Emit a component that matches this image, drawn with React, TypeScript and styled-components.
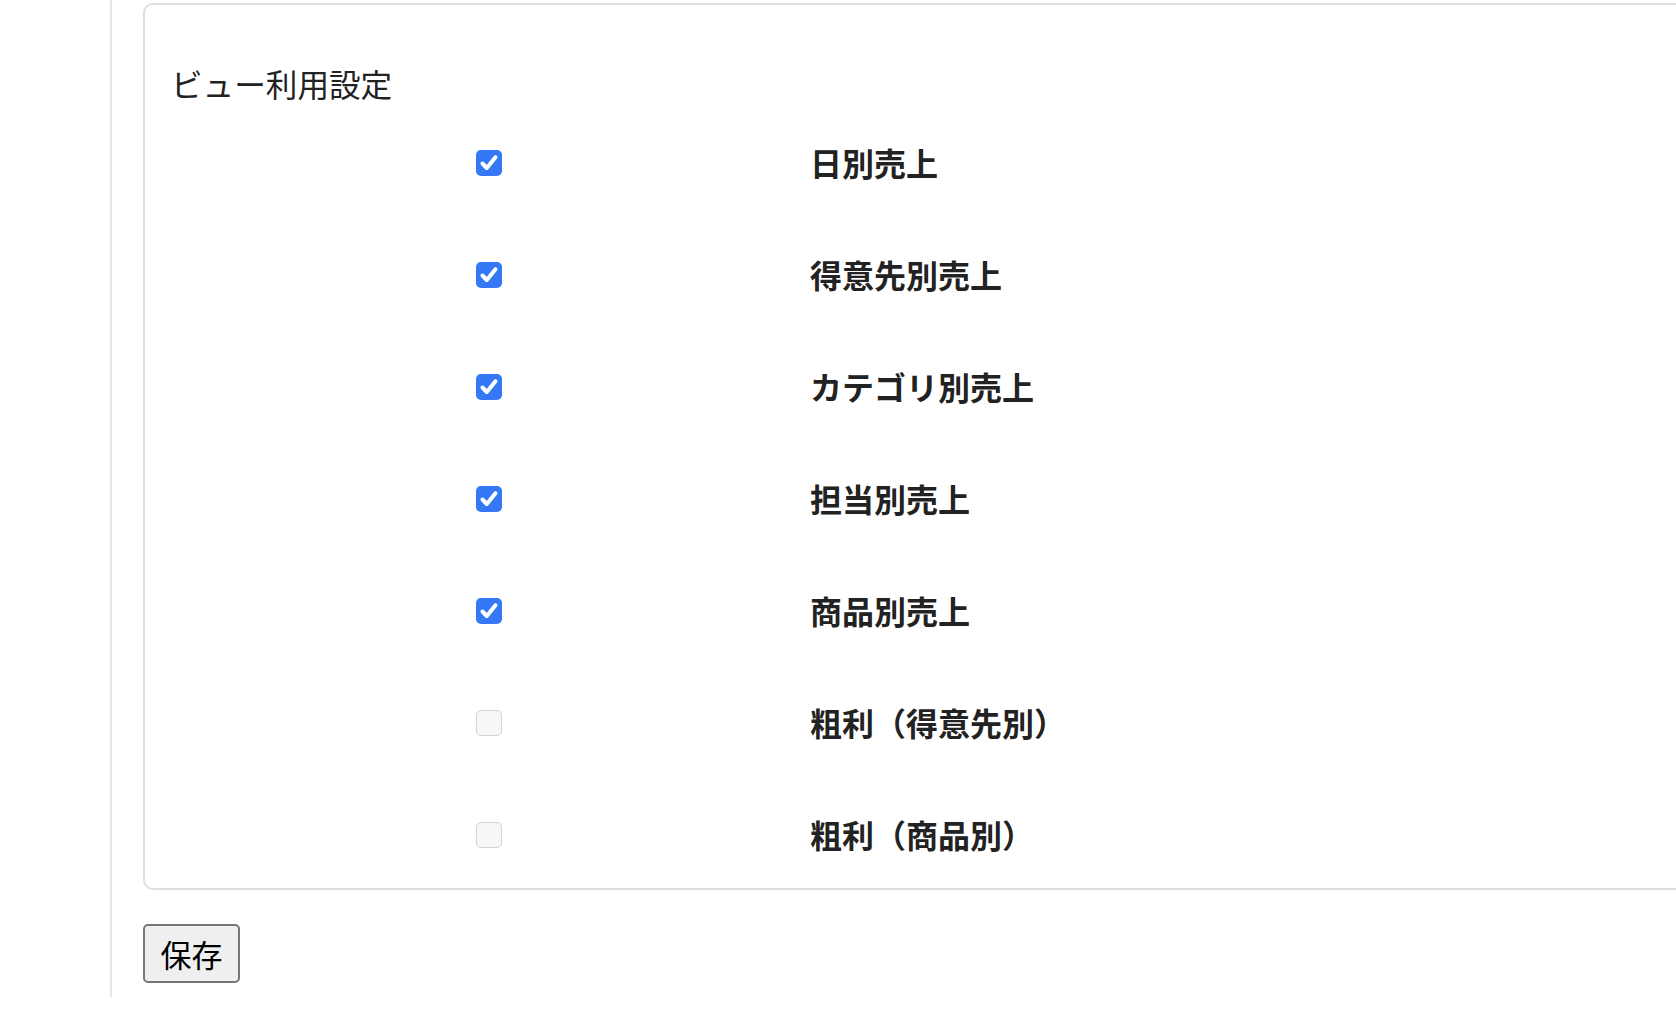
import { useState } from 'react'
import styled, { createGlobalStyle } from 'styled-components'

const GlobalStyle = createGlobalStyle`
  html, body {
    margin: 0;
    padding: 0;
    background: #fff;
    overflow: hidden;
  }
  body {
    font-family: 'Noto Sans CJK JP', 'Noto Sans', sans-serif;
    color: #222;
  }
`

type ViewItem = {
  key: string
  label: string
  enabled: boolean
}

const initialViews: ViewItem[] = [
  { key: 'daily', label: '日別売上', enabled: true },
  { key: 'customer', label: '得意先別売上', enabled: true },
  { key: 'category', label: 'カテゴリ別売上', enabled: true },
  { key: 'staff', label: '担当別売上', enabled: true },
  { key: 'product', label: '商品別売上', enabled: true },
  { key: 'profitCustomer', label: '粗利（得意先別）', enabled: false },
  { key: 'profitProduct', label: '粗利（商品別）', enabled: false },
]

const CheckBox = ({
  checked,
  onToggle,
}: {
  checked: boolean
  onToggle: () => void
}) => (
  <Box $checked={checked} role="checkbox" aria-checked={checked} onClick={onToggle}>
    {checked && (
      <svg width="26" height="26" viewBox="0 0 26 26">
        <path
          d="M6.5 13.5 L10.8 18 L19.5 7.2"
          fill="none"
          stroke="#fff"
          strokeWidth="4"
          strokeLinecap="round"
          strokeLinejoin="round"
        />
      </svg>
    )}
  </Box>
)

const App = () => {
  const [views, setViews] = useState<ViewItem[]>(initialViews)

  const toggle = (key: string) => {
    setViews((prev) =>
      prev.map((it) => (it.key === key ? { ...it, enabled: !it.enabled } : it))
    )
  }

  return (
    <>
      <GlobalStyle />
      <Page>
        <Sidebar />
        <Main>
          <Card>
            <Title>ビュー利用設定</Title>
            <ViewList>
              {views.map((view) => (
                <ViewRow key={view.key}>
                  <CheckBox
                    checked={view.enabled}
                    onToggle={() => toggle(view.key)}
                  />
                  <ViewLabel onClick={() => toggle(view.key)}>
                    {view.label}
                  </ViewLabel>
                </ViewRow>
              ))}
            </ViewList>
          </Card>
          <SaveButton type="button">保存</SaveButton>
        </Main>
      </Page>
    </>
  )
}

export default App

const Page = styled.div`
  display: flex;
  width: 100%;
  height: 997px;
`

const Sidebar = styled.div`
  width: 110px;
  flex-shrink: 0;
  border-right: 2px solid #e3e5e6;
`

const Main = styled.div`
  flex: 1;
  display: flex;
  flex-direction: column;
  align-items: flex-start;
  padding: 3px 0 0 31px;
  min-width: 0;
`

const Card = styled.div`
  box-sizing: border-box;
  width: calc(100% + 60px);
  border: 2px solid #dedede;
  border-radius: 10px;
  padding: 55px 0 30px 26px;
`

const Title = styled.h2`
  margin: 0 0 32px;
  font-size: 31.6px;
  font-weight: 400;
  line-height: 47px;
  color: #222;
`

const ViewList = styled.div`
  display: flex;
  flex-direction: column;
  gap: 65px;
  padding-left: 305px;
`

const ViewRow = styled.div`
  display: grid;
  grid-template-columns: 26px auto;
  column-gap: 308px;
  align-items: center;
  height: 47px;
`

const Box = styled.span<{ $checked: boolean }>`
  box-sizing: border-box;
  display: flex;
  width: 26px;
  height: 26px;
  border-radius: 5px;
  cursor: pointer;
  background: ${({ $checked }) => ($checked ? '#3478f6' : '#f7f7f7')};
  border: ${({ $checked }) =>
    $checked ? 'none' : '1.5px solid #d2d2d2'};
`

const ViewLabel = styled.span`
  font-size: 32px;
  font-weight: 700;
  line-height: 47px;
  color: #222;
  cursor: pointer;
  white-space: nowrap;
`

const SaveButton = styled.button`
  box-sizing: border-box;
  margin-top: 34px;
  height: 59px;
  padding: 0 15.5px;
  font-family: 'Noto Sans CJK JP', sans-serif;
  font-size: 31px;
  line-height: 1;
  color: #000;
  background: #efefef;
  border: 2px solid #767676;
  border-radius: 5px;
  cursor: pointer;
`
